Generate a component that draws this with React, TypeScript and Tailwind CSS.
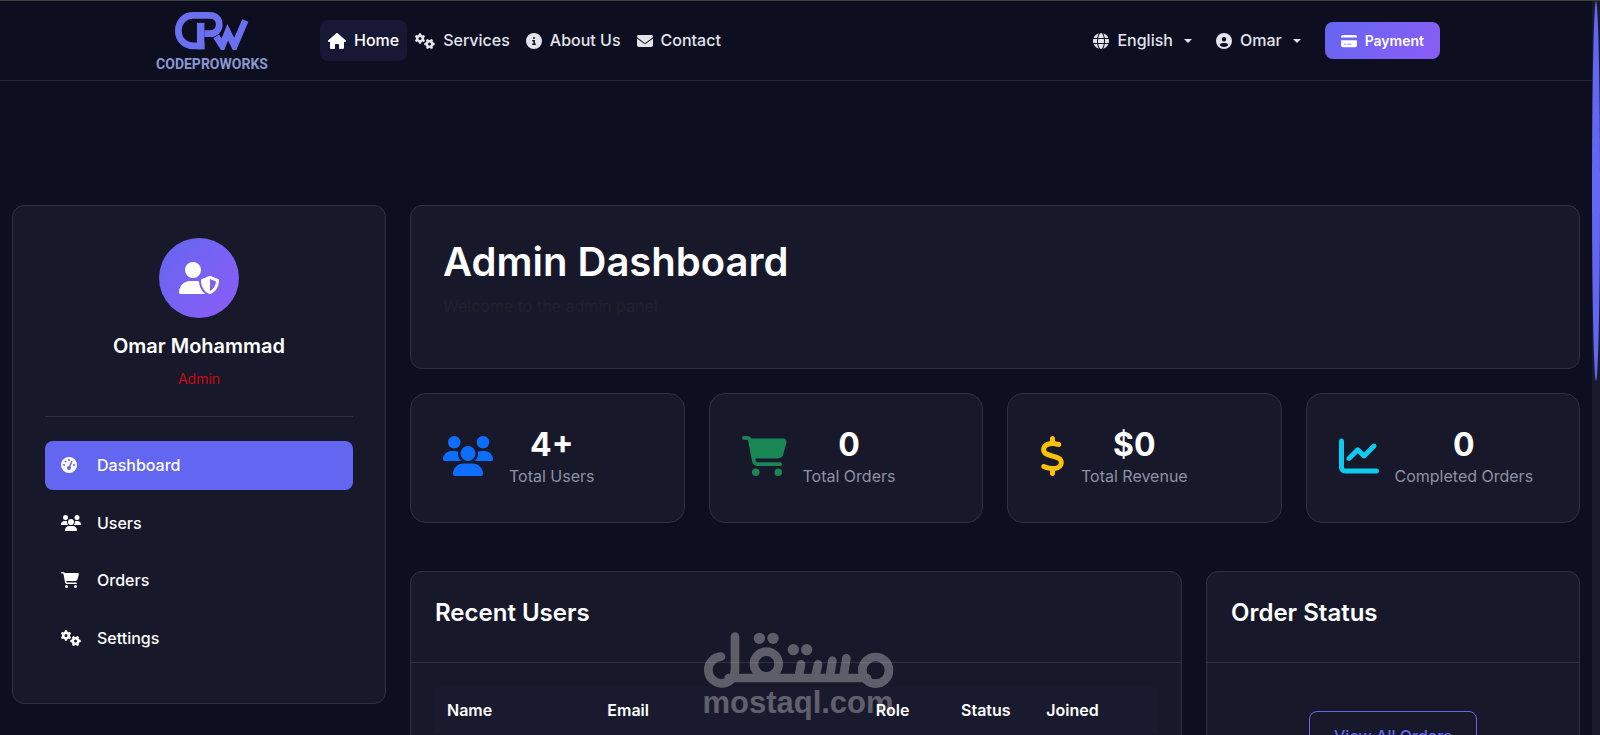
import React from 'react';
import {
  FaHouse,
  FaGears,
  FaCircleInfo,
  FaEnvelope,
  FaGlobe,
  FaCircleUser,
  FaCreditCard,
  FaUserShield,
  FaGaugeHigh,
  FaUsers,
  FaCartShopping,
  FaDollarSign,
  FaChartLine,
} from 'react-icons/fa6';

const navLinks = [
  { label: 'Home', icon: <FaHouse className="h-4 w-[18px]" />, active: true },
  { label: 'Services', icon: <FaGears className="h-4 w-5" />, active: false },
  { label: 'About Us', icon: <FaCircleInfo className="h-4 w-4" />, active: false },
  { label: 'Contact', icon: <FaEnvelope className="h-4 w-4" />, active: false },
];

const sideLinks = [
  { label: 'Dashboard', icon: <FaGaugeHigh className="h-4 w-4" />, active: true },
  { label: 'Users', icon: <FaUsers className="h-4 w-5" />, active: false },
  { label: 'Orders', icon: <FaCartShopping className="h-4 w-[18px]" />, active: false },
  { label: 'Settings', icon: <FaGears className="h-4 w-5" />, active: false },
];

const stats = [
  { value: '4+', label: 'Total Users', icon: <FaUsers className="h-10 w-[50px] text-[#0d6efd]" /> },
  { value: '0', label: 'Total Orders', icon: <FaCartShopping className="h-10 w-[45px] text-[#198754]" /> },
  { value: '$0', label: 'Total Revenue', icon: <FaDollarSign className="h-10 w-[25px] text-[#ffc107]" /> },
  { value: '0', label: 'Completed Orders', icon: <FaChartLine className="h-10 w-10 text-[#0dcaf0]" /> },
];

const columns = [
  { label: 'Name', width: 'w-[22.2%]' },
  { label: 'Email', width: 'w-[37.2%]' },
  { label: 'Role', width: 'w-[11.8%]' },
  { label: 'Status', width: 'w-[11.8%]' },
  { label: 'Joined', width: 'w-[17%]' },
];

const Logo: React.FC = () => (
  <a href="#home" className="mr-12 flex w-[120px] flex-col items-center pt-1">
    <svg viewBox="100 35 225 115" className="h-[39px] w-[76px]" fill="none" stroke="#6a70f0" aria-hidden="true">
      <path d="M190 138H158C130 138 113 118 113 93S130 48 158 48H206C224 48 234 60 234 75S224 102 206 102H190" strokeWidth="20" />
      <path d="M179 70V148" strokeWidth="22" />
      <path d="M225 110L243 138L259 98L279 138L311 63" strokeWidth="20" />
    </svg>
    <span className="mt-1 font-[Roboto,sans-serif] text-sm leading-5 font-bold text-[#8a98cf]">CODEPROWORKS</span>
  </a>
);

const Caret: React.FC = () => (
  <svg viewBox="0 0 8 4" className="ml-[3px] h-1 w-2" fill="currentColor" aria-hidden="true">
    <path d="M0 0H8L4 4Z" />
  </svg>
);

const Header: React.FC = () => (
  <header className="h-20 border-b border-[#26273a]">
    <div className="mx-auto flex h-full max-w-[1320px] items-center px-4">
      <Logo />
      <nav className="flex items-center">
        {navLinks.map((link) => (
          <a
            key={link.label}
            href="#"
            className={
              link.active
                ? 'flex items-center gap-2 rounded-lg bg-[#171835] px-2 py-2 leading-[25px] font-medium text-white'
                : 'flex items-center gap-2 rounded-lg px-2 py-2 leading-[25px] font-medium text-[#e2e4ec]'
            }
          >
            {link.icon}
            {link.label}
          </a>
        ))}
      </nav>
      <div className="ml-auto flex items-center gap-2 text-[#e2e4ec]">
        <button type="button" aria-haspopup="menu" className="flex items-center gap-2 p-2 leading-[25px] font-medium">
          <FaGlobe className="h-4 w-4" />
          English
          <Caret />
        </button>
        <button type="button" aria-haspopup="menu" className="flex items-center gap-2 p-2 leading-[25px] font-medium">
          <FaCircleUser className="h-4 w-4" />
          Omar
          <Caret />
        </button>
        <a
          href="#payment"
          className="ml-2 flex h-[37px] items-center gap-2 rounded-lg bg-linear-135 from-[#6366f1] to-[#8b5cf6] px-4 text-sm font-semibold text-white"
        >
          <FaCreditCard className="h-[14px] w-4" />
          Payment
        </a>
      </div>
    </div>
  </header>
);

const Sidebar: React.FC = () => (
  <aside className="self-start rounded-xl border border-[#2f3041] bg-[#18182b] p-8">
    <div className="flex flex-col items-center border-b border-[#2f3041] pb-5">
      <div className="flex h-20 w-20 items-center justify-center rounded-full bg-linear-135 from-[#6366f1] to-[#8b5cf6]">
        <FaUserShield className="h-8 w-10 text-white" />
      </div>
      <h2 className="mt-4 text-xl leading-6 font-semibold text-white">Omar Mohammad</h2>
      <p className="mt-2 pb-1 text-sm leading-[26px] text-[#c60a10]">Admin</p>
    </div>
    <ul className="mt-6 grid h-[230px] grid-rows-4">
      {sideLinks.map((link) => (
        <li key={link.label} className="pb-[9px]">
          <a
            href="#"
            className={
              link.active
                ? 'flex h-full items-center rounded-lg bg-[#6366f1] px-4 font-medium text-white'
                : 'flex h-full items-center rounded-lg px-4 font-medium text-white'
            }
          >
            <span className="mr-4 flex w-5">{link.icon}</span>
            {link.label}
          </a>
        </li>
      ))}
    </ul>
  </aside>
);

// Watermark laid over the dashboard
const Watermark: React.FC = () => (
  <div className="pointer-events-none absolute top-[631px] left-1/2 -ml-[98px] flex w-48 flex-col items-center text-white opacity-30">
    <svg viewBox="40 35 576 171" className="h-[57px] w-48" fill="none" stroke="currentColor" strokeWidth="26" strokeLinecap="round" aria-hidden="true">
      <circle cx="561" cy="150" r="40" />
      <circle cx="233" cy="131" r="37" />
      <path d="M97 109A40 40 0 1 0 139 150V49" />
      <path d="M120 173H535" />
      <path d="M337 132L330 170M388 132L380 170M431 121L423 170M473 114L464 170" />
      <g fill="currentColor" stroke="none">
        <circle cx="212" cy="54" r="17" />
        <circle cx="253" cy="54" r="17" />
        <circle cx="314" cy="88" r="17" />
        <circle cx="354" cy="88" r="17" />
      </g>
    </svg>
    <span className="font-['Liberation_Sans',sans-serif] text-[31px] leading-7 font-bold">mostaql.com</span>
  </div>
);

const App: React.FC = () => {
  return (
    <div className="relative flex h-screen overflow-hidden border-t border-[#40443f] bg-[#0e0e21] font-[Inter,sans-serif] text-base">
      <div className="min-w-0 flex-1">
        <Header />
        <main className="mt-[124px] grid grid-cols-[minmax(0,1fr)_minmax(0,3fr)]">
          <div className="grid px-3">
            <Sidebar />
          </div>
          <div className="px-3">
            <section className="h-[164px] rounded-xl border border-[#2f3041] bg-[#18182b] p-8">
              <h1 className="text-[40px] leading-[48px] font-semibold text-white">Admin Dashboard</h1>
              <p className="mt-2 leading-6 text-[#212029]">Welcome to the admin panel</p>
            </section>

            <section className="mt-6 grid grid-cols-4 gap-6">
              {stats.map((stat) => (
                <div key={stat.label} className="flex h-[130px] items-start rounded-2xl border border-[#2f3041] bg-[#18182b] p-8">
                  <div className="flex items-center gap-4">
                    <span className="pb-0.5">{stat.icon}</span>
                    <div className="text-center">
                      <div className="text-[32px] leading-[38px] font-bold text-white">{stat.value}</div>
                      <div className="leading-6 text-[#8c92a4]">{stat.label}</div>
                    </div>
                  </div>
                </div>
              ))}
            </section>

            <section className="mt-12 grid grid-cols-[minmax(0,772fr)_minmax(0,374fr)] gap-6">
              <div className="min-h-64 rounded-xl border border-[#2f3041] bg-[#18182b]">
                <h2 className="h-[91px] border-b border-[#2f3041] px-6 pt-[26px] text-2xl leading-[30px] font-semibold text-white">
                  Recent Users
                </h2>
                <div className="p-6">
                  <table className="w-full table-fixed bg-[#1a1a2e] text-left">
                    <thead>
                      <tr>
                        {columns.map((column) => (
                          <th key={column.label} scope="col" className={`${column.width} px-3 pt-[11px] pb-3 leading-6 font-semibold text-white`}>
                            {column.label}
                          </th>
                        ))}
                      </tr>
                    </thead>
                  </table>
                </div>
              </div>
              <div className="min-h-64 rounded-xl border border-[#2f3041] bg-[#18182b]">
                <h2 className="h-[91px] border-b border-[#2f3041] px-6 pt-[26px] text-2xl leading-[30px] font-semibold text-white">
                  Order Status
                </h2>
                <div className="flex justify-center p-12">
                  <a href="#orders" className="rounded-lg border border-[#6366f1] px-6 py-3 leading-6 font-medium text-[#6366f1]">
                    View All Orders
                  </a>
                </div>
              </div>
            </section>
          </div>
        </main>
      </div>

      {/* scroll track */}
      <div className="w-2 bg-[#1a1a2e]">
        <div className="h-[380px] w-2 rounded-[50%] bg-[#6366f1]" />
      </div>

      <Watermark />
    </div>
  );
};

export default App;
